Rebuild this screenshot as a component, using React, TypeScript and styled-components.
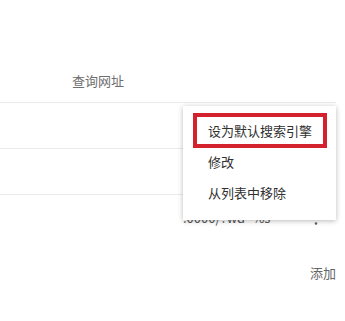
import React from "react";
import styled, { createGlobalStyle } from "styled-components";

const GlobalStyle = createGlobalStyle`
  html, body {
    margin: 0;
    padding: 0;
    background: #ffffff;
  }
  body {
    font-family: "Noto Sans CJK SC", "Noto Sans", sans-serif;
    font-size: 13px;
    color: #333333;
  }
`;

interface Engine {
  url: string;
}

const engines: Engine[] = [{ url: "" }, { url: "" }, { url: ".0000/?wd=%s" }];

const menuItems = ["设为默认搜索引擎", "修改", "从列表中移除"];

export default function App() {
  return (
    <>
      <GlobalStyle />
      <Page>
        <Header>
          <HeaderCell>查询网址</HeaderCell>
        </Header>
        <List>
          {engines.map((engine, i) => (
            <Row key={i}>
              <Cell />
              <Cell />
              <UrlCell>{engine.url}</UrlCell>
              <MoreButton>
                <svg width="20" height="20" viewBox="0 0 20 20">
                  <circle cx="10" cy="4.5" r="1.3" fill="#5f6368" />
                  <circle cx="10" cy="10" r="1.3" fill="#5f6368" />
                  <circle cx="10" cy="15.5" r="1.3" fill="#5f6368" />
                </svg>
              </MoreButton>
            </Row>
          ))}
          <ActionMenu>
            {menuItems.map((label, i) => (
              <MenuItem key={label} highlighted={i === 0}>
                {label}
              </MenuItem>
            ))}
          </ActionMenu>
        </List>
        <Footer>
          <AddButton>添加</AddButton>
        </Footer>
      </Page>
    </>
  );
}

const Page = styled.div`
  width: 345px;
  height: 321px;
  box-sizing: border-box;
  padding-right: 9px;
  overflow: hidden;
`;

const Header = styled.div`
  height: 102px;
  box-sizing: border-box;
  padding-top: 60px;
  padding-left: 72px;
  display: flex;
  align-items: center;
`;

const HeaderCell = styled.div`
  color: #6e6e6e;
  font-size: 13px;
  line-height: 20px;
`;

const List = styled.div`
  position: relative;
`;

const Row = styled.div`
  height: 46px;
  box-sizing: border-box;
  border-top: 1px solid #ebebeb;
  display: grid;
  grid-template-columns: 72px 109px 1fr 40px;
  align-items: center;
`;

const Cell = styled.div``;

const UrlCell = styled.div`
  color: #555555;
  font-size: 13px;
  line-height: 20px;
  padding-left: 2px;
  white-space: nowrap;
  overflow: hidden;
`;

const MoreButton = styled.div`
  display: flex;
  align-items: center;
  justify-content: center;
  margin-top: 1px;
`;

const ActionMenu = styled.div`
  position: absolute;
  top: 4px;
  right: 0;
  width: 153px;
  padding: 9px 0 12px;
  background: #ffffff;
  box-shadow: 0 1px 5px rgba(0, 0, 0, 0.28);
`;

const MenuItem = styled.div<{ highlighted?: boolean }>`
  position: relative;
  height: 31px;
  display: flex;
  align-items: center;
  padding-left: 25px;
  color: #303030;
  font-size: 13px;
  white-space: nowrap;

  &::after {
    content: "";
    display: ${(p) => (p.highlighted ? "block" : "none")};
    position: absolute;
    left: 10px;
    right: 9px;
    top: -2px;
    bottom: -2px;
    border: 4px solid #d3212d;
  }
`;

const Footer = styled.div`
  margin-top: 23px;
  display: flex;
  justify-content: flex-end;
`;

const AddButton = styled.div`
  color: #666666;
  font-size: 13px;
  line-height: 20px;
  cursor: pointer;
`;
